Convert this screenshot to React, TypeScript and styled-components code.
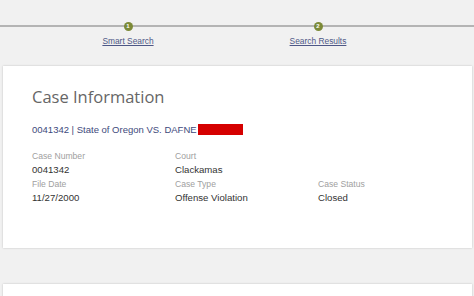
import styled, { createGlobalStyle } from 'styled-components';

const GlobalStyle = createGlobalStyle`
  html, body {
    margin: 0;
    padding: 0;
    background: #f1f1f1;
    font-family: "Liberation Sans", Arial, sans-serif;
  }
  #root {
    width: 474px;
    height: 296px;
    overflow: hidden;
  }
`;

const steps = ['Smart Search', 'Search Results'];

const fields = [
  { label: 'Case Number', value: '0041342' },
  { label: 'Court', value: 'Clackamas' },
  null,
  { label: 'File Date', value: '11/27/2000' },
  { label: 'Case Type', value: 'Offense Violation' },
  { label: 'Case Status', value: 'Closed' },
];

const App = () => {
  return (
    <Page>
      <GlobalStyle />
      <Stepper>
        {steps.map((s, i) => (
          <Step key={s}>
            <Dot>{i + 1}</Dot>
            <StepLink href="#">{s}</StepLink>
          </Step>
        ))}
      </Stepper>
      <Card>
        <Title>Case Information</Title>
        <CaseLink>
          0041342 | State of Oregon VS. DAFNE
          <Redacted />
        </CaseLink>
        <Grid>
          {fields.map((f, i) =>
            f ? (
              <Field key={f.label}>
                <div className="label">{f.label}</div>
                <div className="value">{f.value}</div>
              </Field>
            ) : (
              <Field key={i} />
            )
          )}
        </Grid>
      </Card>
      <Card $short />
    </Page>
  );
};

export default App;

const Page = styled.div`
  display: flex;
  flex-direction: column;
  width: 474px;
  height: 296px;
`;

const Stepper = styled.div`
  display: grid;
  grid-template-columns: 190px 190px;
  align-content: start;
  flex-shrink: 0;
  padding: 22px 0 0 33px;
  height: 44px;
  background-image: linear-gradient(#b4b4b4, #b4b4b4);
  background-size: 100% 2px;
  background-position: 0 25px;
  background-repeat: no-repeat;
`;

const Step = styled.div`
  display: flex;
  flex-direction: column;
  align-items: center;
`;

const Dot = styled.div`
  width: 9px;
  height: 9px;
  border-radius: 50%;
  background: #7c8a37;
  color: #fff;
  font-size: 6px;
  font-weight: bold;
  line-height: 9px;
  text-align: center;
`;

const StepLink = styled.a`
  margin-top: 5px;
  font-size: 8.4px;
  color: #4d5786;
  text-decoration: underline;
`;

const Card = styled.div<{ $short?: boolean }>`
  margin: 0 2px ${({ $short }) => ($short ? '0' : '36px')} 3px;
  height: ${({ $short }) => ($short ? '40px' : '182px')};
  flex-shrink: 0;
  background: #fff;
  box-shadow: 0 0 2px rgba(0, 0, 0, 0.2);
  box-sizing: border-box;
  padding: 20px 29px 0;
`;

const Title = styled.div`
  font-family: "Open Sans", sans-serif;
  font-size: 16.5px;
  line-height: 22px;
  color: #666;
`;

const CaseLink = styled.div`
  margin-top: 15px;
  display: flex;
  align-items: center;
  font-size: 9.5px;
  line-height: 13px;
  color: #3e4a7c;
`;

const Redacted = styled.span`
  display: inline-block;
  width: 45px;
  height: 11px;
  margin-left: 1px;
  background: #d50000;
`;

const Grid = styled.div`
  display: grid;
  grid-template-columns: 143px 143px 143px;
  margin-top: 14px;
  row-gap: 1px;
`;

const Field = styled.div`
  display: flex;
  flex-direction: column;
  .label {
    font-size: 8.6px;
    line-height: 13px;
    color: #a0a0a0;
  }
  .value {
    font-size: 9.6px;
    line-height: 14px;
    color: #333;
  }
`;
